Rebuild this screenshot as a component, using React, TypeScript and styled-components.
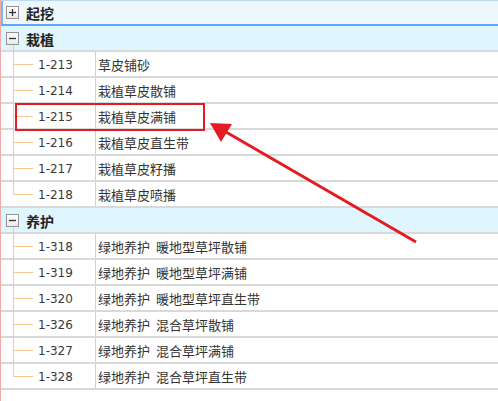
import React from "react";
import styled, { createGlobalStyle, css } from "styled-components";

const TREE = "#f8c88e";
const GRID = "#d9d9d9";
const RED = "#e41b22";

const GlobalStyle = createGlobalStyle`
  html, body {
    margin: 0;
    padding: 0;
    background: #fff;
  }
  body {
    font-family: "Noto Sans CJK SC", sans-serif;
  }
`;

const Page = styled.div`
  position: relative;
  width: 498px;
  height: 401px;
  box-sizing: border-box;
  border-left: 1px solid #f2a9a9;
  overflow: hidden;
  background: #fff;
`;

const GroupRow = styled.div<{ $selected?: boolean; $open?: boolean }>`
  position: relative;
  display: flex;
  align-items: center;
  gap: 7px;
  height: 26px;
  box-sizing: border-box;
  padding-left: 5px;
  background: #e0f6fe;
  border-bottom: 2px solid ${GRID};
  ${(p) =>
    p.$selected &&
    css`
      background: #eef8fc;
      border-top: 1px solid #b9d9f6;
      border-bottom: 2px solid #5ea7f5;
      box-shadow: inset 2px 0 0 #7fb6f0;
    `}
  ${(p) =>
    p.$open &&
    css`
      &::after {
        content: "";
        position: absolute;
        left: 12px;
        top: 19px;
        bottom: -2px;
        width: 1px;
        background: ${TREE};
      }
    `}
`;

const Expander = styled.span`
  display: flex;
  align-items: center;
  justify-content: center;
  width: 13px;
  height: 13px;
  box-sizing: border-box;
  border: 1px solid #939393;
  background: linear-gradient(#ffffff, #ebebeb);
`;

const GroupTitle = styled.span`
  font-family: "Noto Sans CJK SC", sans-serif;
  font-size: 14px;
  font-weight: 700;
  color: #222;
  line-height: 1;
  padding-top: 1px;
`;

const DataRow = styled.div<{ $last?: boolean }>`
  position: relative;
  display: grid;
  grid-template-columns: 95px 1fr;
  height: 26px;
  box-sizing: border-box;
  border-bottom: 2px solid ${GRID};
  background: #fff;

  &::before {
    content: "";
    position: absolute;
    left: 12px;
    top: 0;
    bottom: ${(p) => (p.$last ? "12px" : "-2px")};
    width: 1px;
    background: ${TREE};
  }

  &::after {
    content: "";
    position: absolute;
    left: 12px;
    top: 12px;
    width: 20px;
    height: 1px;
    background: ${TREE};
  }
`;

const CodeCell = styled.div`
  display: flex;
  align-items: center;
  box-sizing: border-box;
  padding: 1px 0 0 37px;
  border-right: 1px solid #d0d0d0;
  font-family: "DejaVu Sans", sans-serif;
  font-size: 12px;
  color: #3a3a3a;
`;

const NameCell = styled.div`
  display: flex;
  align-items: center;
  padding: 1px 0 0 2px;
  font-family: "Noto Sans CJK SC", sans-serif;
  font-size: 13px;
  color: #333;
  white-space: pre;
  word-spacing: 3px;
`;

const Highlight = styled.div`
  position: absolute;
  left: 14px;
  top: 103px;
  width: 190px;
  height: 28px;
  box-sizing: border-box;
  border: 2px solid ${RED};
  pointer-events: none;
`;

const ArrowLayer = styled.svg`
  position: absolute;
  left: -1px;
  top: 0;
  pointer-events: none;
`;

type Group = {
  title: string;
  open: boolean;
  selected?: boolean;
  items: [string, string][];
};

const GROUPS: Group[] = [
  { title: "起挖", open: false, selected: true, items: [] },
  {
    title: "栽植",
    open: true,
    items: [
      ["1-213", "草皮铺砂"],
      ["1-214", "栽植草皮散铺"],
      ["1-215", "栽植草皮满铺"],
      ["1-216", "栽植草皮直生带"],
      ["1-217", "栽植草皮籽播"],
      ["1-218", "栽植草皮喷播"],
    ],
  },
  {
    title: "养护",
    open: true,
    items: [
      ["1-318", "绿地养护 暖地型草坪散铺"],
      ["1-319", "绿地养护 暖地型草坪满铺"],
      ["1-320", "绿地养护 暖地型草坪直生带"],
      ["1-326", "绿地养护 混合草坪散铺"],
      ["1-327", "绿地养护 混合草坪满铺"],
      ["1-328", "绿地养护 混合草坪直生带"],
    ],
  },
];

function ExpandIcon({ open }: { open: boolean }) {
  return (
    <Expander>
      <svg width="11" height="11" viewBox="0 0 11 11">
        <path d="M2 5.5h7" stroke="#333" strokeWidth="1.3" />
        {!open && <path d="M5.5 2v7" stroke="#333" strokeWidth="1.3" />}
      </svg>
    </Expander>
  );
}

export default function App() {
  return (
    <Page>
      <GlobalStyle />
      {GROUPS.map((g) => (
        <React.Fragment key={g.title}>
          <GroupRow $selected={g.selected} $open={g.open && g.items.length > 0}>
            <ExpandIcon open={g.open} />
            <GroupTitle>{g.title}</GroupTitle>
          </GroupRow>
          {g.open &&
            g.items.map(([code, name], i) => (
              <DataRow key={code} $last={i === g.items.length - 1}>
                <CodeCell>{code}</CodeCell>
                <NameCell>{name}</NameCell>
              </DataRow>
            ))}
        </React.Fragment>
      ))}
      <Highlight />
      <ArrowLayer width="498" height="401" viewBox="0 0 498 401">
        <line x1="416" y1="242" x2="226" y2="132" stroke={RED} strokeWidth="3" />
        <polygon points="210,123 232,124 221,142" fill={RED} />
      </ArrowLayer>
    </Page>
  );
}
